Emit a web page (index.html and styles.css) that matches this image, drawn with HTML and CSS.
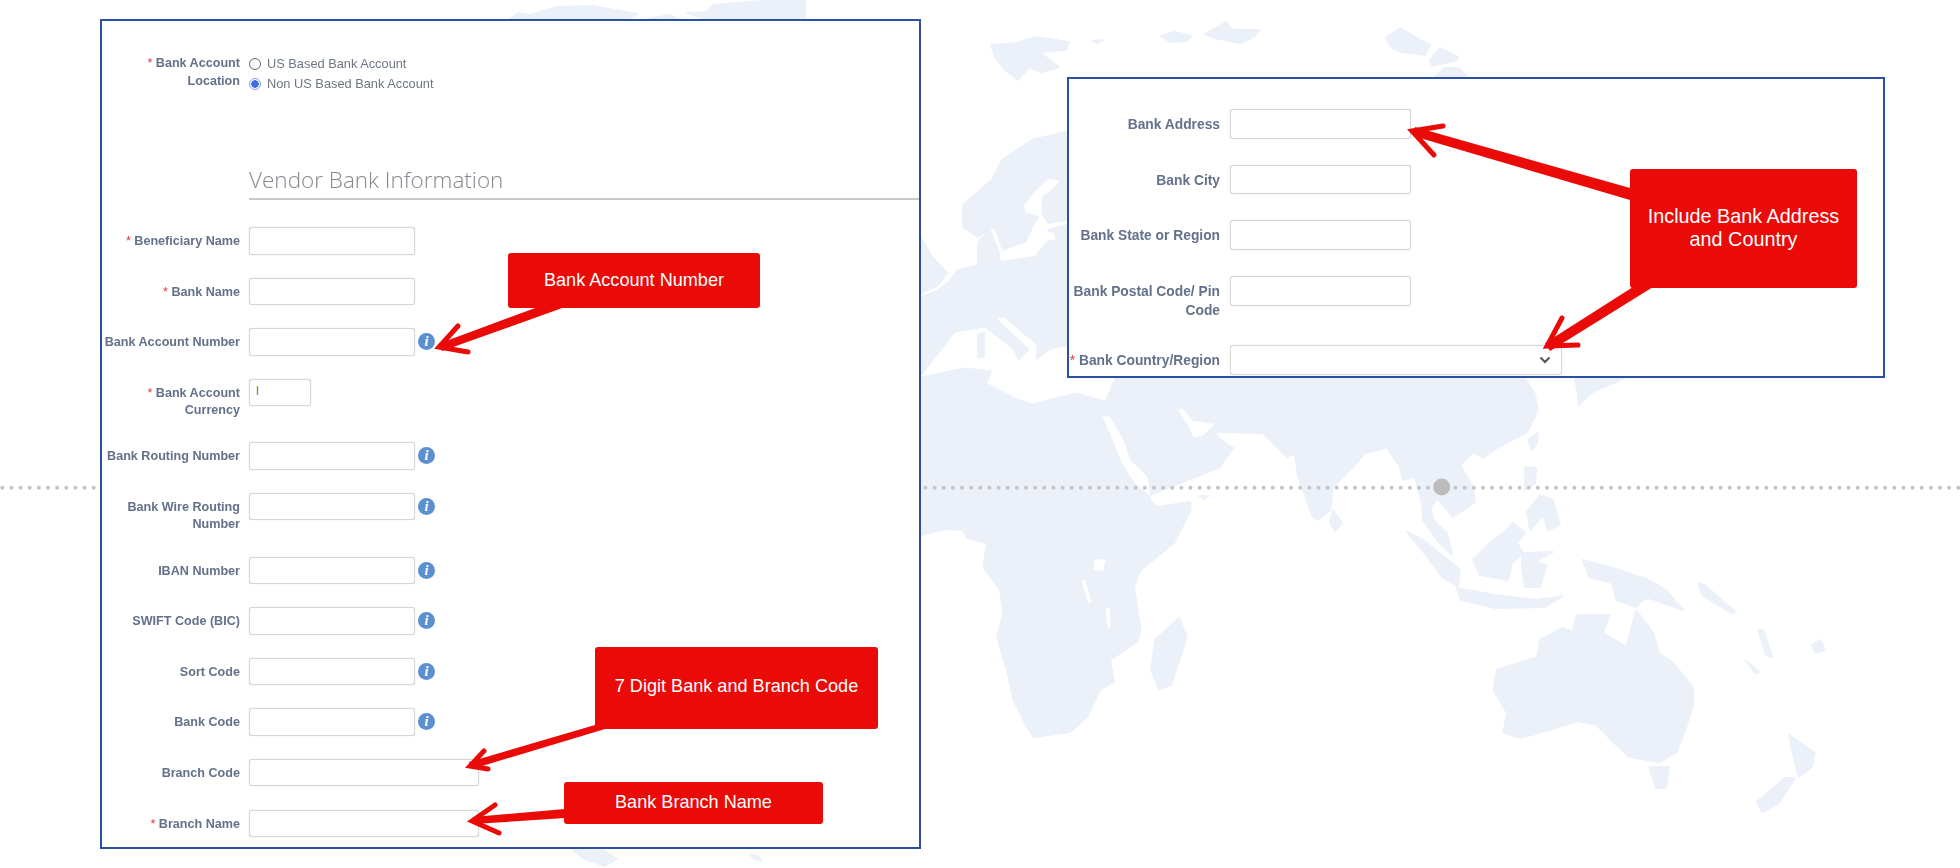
FILE: index.html
```html
<!DOCTYPE html>
<html lang="en">
<head>
<meta charset="utf-8">
<title>Vendor Bank Information</title>
<link rel="stylesheet" href="styles.css">
</head>
<body>
<div class="canvas">
  <svg class="layer" viewBox="0 0 1960 868" aria-hidden="true">
    <g class="land">
      <polygon points="900,300 921,297 935,292 948,283 958,270 978,265 978,243 990,230 998,250 1000,262 1035,257 1047,242 1057,240 1055,233 1048,230 1068,225 1525,370 1525,378 1535,395 1538,410 1527,432 1497,448 1483,458 1473,452 1460,465 1473,487 1475,502 1453,517 1437,498 1430,510 1435,522 1447,533 1452,555 1437,540 1423,520 1422,503 1415,477 1403,480 1400,467 1387,448 1365,453 1353,467 1333,487 1330,510 1318,520 1313,517 1298,477 1295,453 1287,457 1277,447 1263,433 1218,432 1215,423 1193,420 1183,407 1177,410 1187,425 1193,438 1203,437 1215,425 1217,437 1233,448 1220,467 1193,478 1150,495 1150,500 1157,507 1190,502 1190.700,510 1174,543 1140.600,570 1134,587 1140.600,630 1137,642 1110,660 1114,682 1100,690 1087,717 1070,732 1033.600,737 1027,727 1013.600,700 1007,670 997,637 1003.500,613 1000,590 983.500,567 987,543 967,538 963,530 947,529 921,535 900,535"/>
      <polygon points="1100,225 1068,220 1048,223 1042,213 1043,197 1055,188 1062,180 1048,178 1035,190 1023,205 1025,213 1038,217 1032,227 1025,242 1015,245 1003,250 995,228 991,228 978,237 963,227 963,205 992,180 1002,160 1032,140 1065,132 1100,130"/>
      <polygon points="900,230 921,238 932,257 947,273 938,285 921,293 900,295"/>
      <polygon points="991,45 1018,43 1035,37 1069,42 1066,50 1039,52 1059,67 1042,72 1029,67 1018,80 1005,70 995,57"/>
      <polygon points="1161,36 1175,32 1191,36 1186,41 1170,42"/>
      <polygon points="1205,34 1218,27 1226,22 1232,30 1259,30 1255,36 1240,43 1215,38"/>
      <polygon points="1386,38 1400,28 1420,40 1430,45 1425,55 1402,52 1392,48"/>
      <polygon points="1430,60 1440,48 1458,57 1457,60 1432,66"/>
      <polygon points="1435,77 1445,68 1458,68 1468,77"/>
      <polygon points="1093,41 1103,40 1098,43"/>
      <polygon points="510,19 518,13 530,15 557,7 593,6 637,14 627,19"/>
      <polygon points="647,19 670,15 678,19"/>
      <polygon points="687,13 707,12 713,5 747,2 780,0 805,0 805,19 705,19"/>
      <polygon points="573,850 603,850 617,859 605,866 583,858"/>
      <polygon points="750,855 758,856 762,861 755,859"/>
      <polygon points="1333,510 1342,523 1335,531 1330,523"/>
      <polygon points="1528,440 1538,433 1537,443 1532,450"/>
      <polygon points="1513,523 1525,533 1517,543 1523,553 1512,563 1508,580 1480,575 1473,560 1490,543 1503,533"/>
      <polygon points="1407,532 1423,540 1448,560 1460,570 1458,587 1442,577 1422,550"/>
      <polygon points="1199,496 1208,496 1204,499"/>
      <g transform="matrix(.992 0 0 1 7.360 0)">
        <polygon points="1181,618 1189,637 1173,685 1161,689 1153,670 1157,640"/>
        <polygon points="1580,378 1630,378 1598,392 1584,405 1583,392"/>
        <polygon points="1530,467 1541,468 1540,483 1530,490"/>
        <polygon points="1545,495 1558,500 1565,525 1553,530 1548,515 1535,530 1532,512"/>
        <polygon points="1461,588 1500,595 1540,600 1568,596 1550,607 1500,608 1465,600"/>
        <polygon points="1527,553 1558,552 1540,562 1552,565 1545,587 1530,587 1527,570"/>
        <polygon points="1588,560 1615,567 1655,580 1672,590 1689,610 1655,598 1648,600 1642,607 1622,600 1618,583 1595,577"/>
        <polygon points="1582,615 1615,615 1608.500,633 1632,647 1642,610 1659,633 1665,653 1679,663 1699,687 1699,707 1692,728 1682,753 1665,762 1635,757 1622,745 1602,725 1582,721 1555,730 1525,738 1508,732 1512,713 1498,690 1501.500,670 1542,657 1545,640 1568,628 1578,632"/>
        <polygon points="1655,767 1675,767 1672,788 1662,788"/>
        <polygon points="1796,735 1822,753 1819,767 1806,777 1802,763"/>
        <polygon points="1792,778 1802,778 1786,803 1769,812 1763.600,802"/>
        <polygon points="1705,583 1712,586 1742,612 1738,613 1708,595"/>
        <polygon points="1765,630 1770,630 1779,657 1773,655"/>
        <polygon points="1752,660 1766,672 1762,673"/>
        <polygon points="1819,645 1828,640 1832,650 1823,653"/>
      </g>
    </g>
    <g class="sea">
      <polygon points="921,377 955,333 985,328 1013,350 1018,362 1026,354 1030,349 998,319 1004,318 1036,345 1035,362 1050,350 1065,347 1115,380 1112,383 1105,400 1075,392 1032,403 1015,397 988,383 993,370 965,367 900,380"/>
      <polygon points="1103,416 1110,418 1123,440 1130,460 1147,477 1150,495 1135,483 1122,462 1113,440"/>
      <polygon points="1095,560 1105,560 1103,570 1094,570"/>
      <polygon points="1082,580 1085,580 1091,602 1088,602"/>
      <polygon points="1106,608 1109,608 1110,627 1108,627"/>
    </g>
    <g class="land">
      <polygon points="978,335 984,333 984,357 978,357"/>
    </g>
    <line class="dots" x1="2.300" y1="487.700" x2="1960" y2="487.700"/>
    <circle class="pin" cx="1441.700" cy="487" r="8.500"/>
  </svg>

  <section class="panel panel-main">
    <div class="location">
      <div class="label"><span class="req">*</span> Bank Account Location</div>
      <div class="radios">
        <div class="radio-row"><span class="radio"></span>US Based Bank Account</div>
        <div class="radio-row"><span class="radio radio-on"></span>Non US Based Bank Account</div>
      </div>
    </div>
    <h2 class="section-title">Vendor Bank Information</h2>
    <div class="fields">
      <div class="field"><div class="label"><span class="req">*</span> Beneficiary Name</div><div class="input"></div></div>
      <div class="field"><div class="label"><span class="req">*</span> Bank Name</div><div class="input"></div></div>
      <div class="field"><div class="label nowrap">Bank Account Number</div><div class="input"></div><span class="info">i</span></div>
      <div class="field tall"><div class="label"><span class="req">*</span> Bank Account Currency</div><div class="input input-short">l</div></div>
      <div class="field"><div class="label nowrap">Bank Routing Number</div><div class="input"></div><span class="info">i</span></div>
      <div class="field tall"><div class="label">Bank Wire Routing Number</div><div class="input"></div><span class="info">i</span></div>
      <div class="field"><div class="label">IBAN Number</div><div class="input"></div><span class="info">i</span></div>
      <div class="field"><div class="label">SWIFT Code (BIC)</div><div class="input"></div><span class="info">i</span></div>
      <div class="field"><div class="label">Sort Code</div><div class="input"></div><span class="info">i</span></div>
      <div class="field"><div class="label">Bank Code</div><div class="input"></div><span class="info">i</span></div>
      <div class="field"><div class="label">Branch Code</div><div class="input input-wide"></div></div>
      <div class="field"><div class="label"><span class="req">*</span> Branch Name</div><div class="input input-wide"></div></div>
    </div>
  </section>

  <section class="panel panel-side">
    <div class="side-field"><div class="label">Bank Address</div><div class="input"></div></div>
    <div class="side-field"><div class="label">Bank City</div><div class="input"></div></div>
    <div class="side-field"><div class="label">Bank State or Region</div><div class="input"></div></div>
    <div class="side-field side-tall"><div class="label">Bank Postal Code/ Pin Code</div><div class="input"></div></div>
    <div class="side-field"><div class="label nowrap"><span class="req">*</span> Bank Country/Region</div>
      <div class="input input-select">
        <svg class="chevron" viewBox="0 0 12 8" aria-hidden="true"><path d="M1.500 1.500 6 6l4.500-4.500"/></svg>
      </div>
    </div>
  </section>

  <svg class="layer" viewBox="0 0 1960 868" aria-hidden="true">
    <g class="arrow">
      <polygon class="shaft" points="538,307 565,307 442,351 438,344"/>
      <polyline points="458,326 439,347 468,352"/>
      <polygon class="shaft" points="595,725 605,729 472,769 469,762"/>
      <polyline points="484,751 470,766 488,769"/>
      <polygon class="shaft" points="565,809 565,818 474,824 473,817"/>
      <polyline points="495,805 472,821 499,833"/>
      <polygon class="shaft" points="1630,188 1630,200 1413,136 1415,127"/>
      <polyline points="1443,126 1412,131 1434,155"/>
      <polygon class="shaft" points="1633,287 1653,287 1550,351 1545,343"/>
      <polyline points="1562,318 1547,346 1578,345"/>
    </g>
  </svg>

  <div class="callout callout-account">Bank Account Number</div>
  <div class="callout callout-digit">7 Digit Bank and Branch Code</div>
  <div class="callout callout-branch">Bank Branch Name</div>
  <div class="callout callout-include">Include Bank Address<br>and Country</div>
</div>
</body>
</html>
```

FILE: styles.css
```css
* { box-sizing: border-box; }
html, body { margin: 0; padding: 0; background: #fff; }
.canvas {
  position: relative;
  width: 1960px;
  height: 868px;
  overflow: hidden;
  font-family: "Liberation Sans", Arial, sans-serif;
}
.layer { position: absolute; left: 0; top: 0; width: 1960px; height: 868px; pointer-events: none; }
.land { fill: #ecf1f9; stroke: #ecf1f9; stroke-width: 2; stroke-linejoin: round; }
.sea { fill: #fff; stroke: #fff; stroke-width: 1; stroke-linejoin: round; }
.dots { stroke: #c4c4c4; stroke-width: 4; stroke-linecap: round; stroke-dasharray: 0 9.14; }
.pin { fill: #bcbcbc; }
.arrow polygon { fill: #ea0a08; }
.arrow polyline { fill: none; stroke: #ea0a08; stroke-width: 5; stroke-linecap: round; stroke-linejoin: miter; }

.panel {
  position: absolute;
  background: #fff;
  border: 2px solid #2a4fa3;
}
.panel-main { left: 100px; top: 19px; width: 821px; height: 830px; padding-top: 34px; }
.panel-side { left: 1067px; top: 77px; width: 818px; height: 301px; padding-top: 30px; }

.label {
  color: #64718a;
  font-size: 12.600px;
  font-weight: 700;
  line-height: 17.500px;
  text-align: right;
  filter: blur(.35px);
}
.nowrap { white-space: nowrap; }
.req { color: #e8353a; font-weight: 400; }

.location { display: flex; gap: 9px; height: 36px; }
.location .label { width: 138px; flex: none; padding-left: 40px; }
.radios { display: flex; flex-direction: column; gap: 2px; color: #6e7680; font-size: 12.800px; line-height: 18px; filter: blur(.35px); }
.radio-row { display: flex; align-items: center; gap: 6px; }
.radio { width: 12px; height: 12px; border: 1px solid #666; border-radius: 50%; flex: none; background: #fff; }
.radio-on { border-color: #7f9fe8; background: radial-gradient(circle, #3e6de0 0 3.500px, #fff 4px); }

.section-title {
  margin: 74px 0 27px 147px;
  padding-bottom: 3px;
  border-bottom: 2px solid #c9c9c9;
  color: #84898e;
  font-family: "Open Sans", sans-serif;
  font-size: 22.500px;
  font-weight: 300;
  line-height: 30px;
  filter: blur(.25px);
}

.fields { display: flex; flex-direction: column; }
.field { display: flex; align-items: flex-start; gap: 9px; height: 50.600px; }
.tall { height: 63.600px; }
.field .label { width: 138px; flex: none; padding-top: 6px; }
.input {
  width: 166px;
  height: 27.500px;
  flex: none;
  border: 1px solid #d6d6d6;
  border-radius: 3px;
  box-shadow: 0 0 1px #c8c8c8;
  background: #fff;
  color: #777;
  font-size: 13px;
  line-height: 22px;
  padding-left: 6px;
}
.input-short { width: 62px; }
.input-wide { width: 230px; }
.info {
  width: 17px;
  height: 17px;
  flex: none;
  margin: 5px 0 0 -6px;
  border-radius: 50%;
  background: #5b8fd0;
  color: #fff;
  font-family: "Liberation Serif", serif;
  font-size: 14px;
  font-style: italic;
  font-weight: 700;
  line-height: 17px;
  text-align: center;
}

.side-field { display: flex; align-items: flex-start; gap: 10px; height: 55.700px; }
.side-tall { height: 69px; }
.side-field .label { width: 151px; flex: none; padding-top: 6px; font-size: 13.800px; line-height: 19px; }
.side-field .input { width: 181px; height: 29.500px; }
.side-field .input-select {
  width: 332px;
  display: flex;
  align-items: center;
  justify-content: flex-end;
  padding-right: 10px;
}
.chevron { width: 12px; height: 8px; fill: none; stroke: #555; stroke-width: 2; }

.callout {
  position: absolute;
  background: #ea0a08;
  border-radius: 3px;
  color: #fff;
  font-size: 18.100px;
  line-height: 23px;
  text-align: center;
}
.callout-account { left: 508px; top: 253px; width: 252px; height: 55px; padding-top: 16px; }
.callout-digit { left: 595px; top: 647px; width: 283px; height: 82px; padding-top: 28px; }
.callout-branch { left: 564px; top: 782px; width: 259px; height: 42px; padding-top: 9px; }
.callout-include { left: 1630px; top: 169px; width: 227px; height: 119px; padding-top: 36px; font-size: 19.800px; }
```
